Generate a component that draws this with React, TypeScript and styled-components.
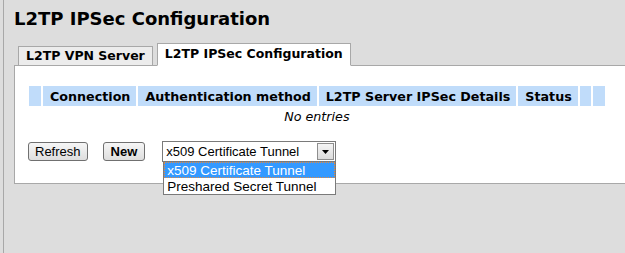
import React from "react";
import styled, { createGlobalStyle } from "styled-components";

const Global = createGlobalStyle`
  html, body {
    margin: 0;
    padding: 0;
    background: #dddddd;
    overflow: hidden;
  }
`;

const Page = styled.div`
  margin-left: 3px;
  border-left: 1px solid #a8a8a8;
  background: #dddddd;
  height: 253px;
  padding-left: 10px;
  font-family: "DejaVu Sans", Verdana, sans-serif;
  color: #000;
  box-sizing: border-box;
  overflow: hidden;
`;

const Title = styled.h1`
  margin: 0;
  padding-top: 7px;
  font-size: 18px;
  line-height: 24px;
  font-weight: bold;
  height: 36px;
  box-sizing: border-box;
`;

const TabBar = styled.div`
  display: flex;
  align-items: flex-end;
  gap: 4px;
  padding-left: 4px;
  height: 30px;
  position: relative;
  z-index: 1;
  margin-bottom: -1px;
`;

const Tab = styled.div<{ $active?: boolean }>`
  box-sizing: border-box;
  height: ${(p) => (p.$active ? "23px" : "20px")};
  padding: 0 7px;
  border: 1px solid #a8a8a8;
  border-bottom: ${(p) => (p.$active ? "1px solid #ffffff" : "1px solid #a8a8a8")};
  background: ${(p) => (p.$active ? "#ffffff" : "#ececec")};
  font-size: 12.5px;
  font-weight: bold;
  line-height: ${(p) => (p.$active ? "20px" : "18px")};
  white-space: nowrap;
`;

const Panel = styled.div`
  width: 660px;
  box-sizing: border-box;
  background: #ffffff;
  border: 1px solid #a8a8a8;
  padding: 18px 12px 21px 12px;
`;

const Table = styled.table`
  border-spacing: 2px;
  border-collapse: separate;
  font-size: 12.7px;
`;

const HeadCell = styled.th<{ $w?: number }>`
  background: #c0dcfa;
  height: 20px;
  padding: 0 6px 0 7px;
  font-weight: bold;
  white-space: nowrap;
  text-align: left;
  ${(p) => (p.$w !== undefined ? `width: ${p.$w}px; padding: 0;` : "")}
`;

const EmptyCell = styled.td`
  text-align: center;
  font-style: italic;
  height: 16px;
  line-height: 17px;
  padding: 0;
`;

const Controls = styled.div`
  display: flex;
  align-items: center;
  margin-top: 14px;
  padding-left: 1px;
  font-family: "Liberation Sans", Arial, sans-serif;
  font-size: 13px;
`;

const Button = styled.button<{ $bold?: boolean }>`
  box-sizing: border-box;
  height: 19px;
  padding: 0 ${(p) => (p.$bold ? "7px" : "6px")};
  margin: 0 ${(p) => (p.$bold ? "17px" : "15px")} 0 0;
  border: 1px solid #707070;
  border-radius: 3px;
  background: linear-gradient(#f6f6f6, #dedede);
  font-family: "Liberation Sans", Arial, sans-serif;
  font-size: 13px;
  font-weight: ${(p) => (p.$bold ? "bold" : "normal")};
  color: #000;
  line-height: 17px;
`;

const SelectWrap = styled.div`
  position: relative;
  width: 174px;
  height: 21px;
`;

const SelectBox = styled.div`
  box-sizing: border-box;
  display: flex;
  align-items: center;
  height: 21px;
  border: 1px solid #7a7a7a;
  background: #fff;
  padding-left: 3px;
`;

const SelectText = styled.span`
  flex: 1;
  white-space: nowrap;
`;

const Arrow = styled.span`
  box-sizing: border-box;
  width: 17px;
  height: 17px;
  margin-right: 1px;
  border: 1px solid #8e8e8e;
  background: linear-gradient(#f4f4f4, #dcdcdc);
  display: flex;
  align-items: center;
  justify-content: center;
`;

const List = styled.div`
  position: absolute;
  left: 1px;
  top: 21px;
  width: 173px;
  box-sizing: border-box;
  border: 1px solid #7a7a7a;
  border-top: none;
  background: #fff;
  font-size: 13.5px;
`;

const Option = styled.div<{ $selected?: boolean }>`
  height: 16px;
  line-height: 15px;
  padding-left: 2px;
  box-sizing: border-box;
  white-space: nowrap;
  color: ${(p) => (p.$selected ? "#fff" : "#000")};
  background: ${(p) => (p.$selected ? "#3399ff" : "#fff")};
  border: 1px dotted ${(p) => (p.$selected ? "#e8883a" : "transparent")};
`;

export default function App() {
  return (
    <>
      <Global />
      <Page>
        <Title>L2TP IPSec Configuration</Title>
        <TabBar>
          <Tab>L2TP VPN Server</Tab>
          <Tab $active>L2TP IPSec Configuration</Tab>
        </TabBar>
        <Panel>
          <Table>
            <thead>
              <tr>
                <HeadCell $w={12}></HeadCell>
                <HeadCell>Connection</HeadCell>
                <HeadCell>Authentication method</HeadCell>
                <HeadCell>L2TP Server IPSec Details</HeadCell>
                <HeadCell>Status</HeadCell>
                <HeadCell $w={11}></HeadCell>
                <HeadCell $w={12}></HeadCell>
              </tr>
            </thead>
            <tbody>
              <tr>
                <EmptyCell colSpan={7}>No entries</EmptyCell>
              </tr>
            </tbody>
          </Table>
          <Controls>
            <Button>Refresh</Button>
            <Button $bold>New</Button>
            <SelectWrap>
              <SelectBox>
                <SelectText>x509 Certificate Tunnel</SelectText>
                <Arrow>
                  <svg width="7" height="4" viewBox="0 0 7 4">
                    <path d="M0 0H7L3.5 4Z" fill="#000" />
                  </svg>
                </Arrow>
              </SelectBox>
              <List>
                <Option $selected>x509 Certificate Tunnel</Option>
                <Option>Preshared Secret Tunnel</Option>
              </List>
            </SelectWrap>
          </Controls>
        </Panel>
      </Page>
    </>
  );
}
